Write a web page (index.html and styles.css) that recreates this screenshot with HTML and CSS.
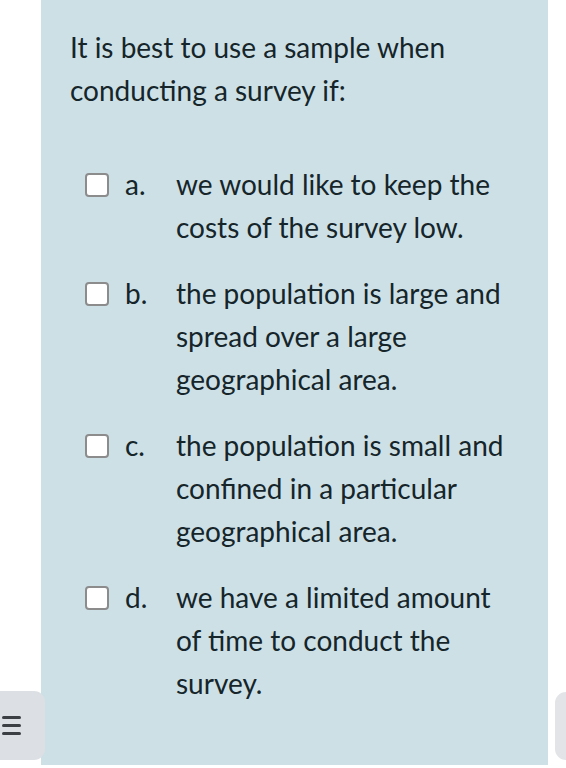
FILE: index.html
```html
<!DOCTYPE html>
<html lang="en">
<head>
<meta charset="utf-8">
<title>Survey question</title>
<link rel="stylesheet" href="styles.css">
</head>
<body>
<main class="panel">
  <p class="question">It is best to use a sample when conducting a survey if:</p>
  <ul class="options">
    <li class="option">
      <span class="box"></span>
      <span class="letter">a.</span>
      <span class="text">we would like to keep the costs of the survey low.</span>
    </li>
    <li class="option">
      <span class="box"></span>
      <span class="letter">b.</span>
      <span class="text">the population is large and spread over a large geographical area.</span>
    </li>
    <li class="option">
      <span class="box"></span>
      <span class="letter">c.</span>
      <span class="text">the population is small and confined in a particular geographical area.</span>
    </li>
    <li class="option">
      <span class="box"></span>
      <span class="letter">d.</span>
      <span class="text">we have a limited amount of time to conduct the survey.</span>
    </li>
  </ul>
</main>
<button class="menu-btn" aria-label="Menu">
  <span class="bar"></span><span class="bar"></span><span class="bar"></span>
</button>
<button class="side-btn" aria-label="Next"></button>
</body>
</html>
```

FILE: styles.css
```css
html, body {
  margin: 0;
  padding: 0;
  background: #ffffff;
}
body {
  width: 566px;
  height: 768px;
  overflow: hidden;
  position: relative;
  font-family: Lato, "Noto Sans", sans-serif;
  color: #15252a;
}
.panel {
  margin-left: 41px;
  width: 507px;
  height: 765px;
  background: #cde0e6;
  box-sizing: border-box;
  padding: 26px 32px 0 29px;
}
.question {
  margin: 0;
  font-size: 28px;
  line-height: 43px;
}
.options {
  list-style: none;
  margin: 51px 0 0 0;
  padding: 0 0 0 15px;
  display: flex;
  flex-direction: column;
  gap: 23px;
}
.option {
  display: flex;
  align-items: flex-start;
  font-size: 28px;
  line-height: 43px;
}
.box {
  flex: none;
  width: 24px;
  height: 24px;
  box-sizing: border-box;
  border: 2px solid #8c8c8c;
  border-radius: 4px;
  background: #ffffff;
  margin-top: 10px;
}
.letter {
  flex: none;
  width: 51px;
  margin-left: 16px;
}
.text {
  flex: 1;
}
.menu-btn {
  position: absolute;
  left: 0;
  top: 691px;
  width: 45px;
  height: 69px;
  border: none;
  border-radius: 0 11px 11px 0;
  background: #dcdfe4;
  padding: 0 0 0 2px;
  display: flex;
  flex-direction: column;
  justify-content: center;
  gap: 5px;
}
.bar {
  display: block;
  width: 19px;
  height: 3px;
  border-radius: 2px;
  background: #3c3f44;
}
.side-btn {
  position: absolute;
  left: 555px;
  top: 692px;
  width: 11px;
  height: 68px;
  border: none;
  padding: 0;
  border-radius: 11px 0 0 11px;
  background: #e2e4e8;
}
```
